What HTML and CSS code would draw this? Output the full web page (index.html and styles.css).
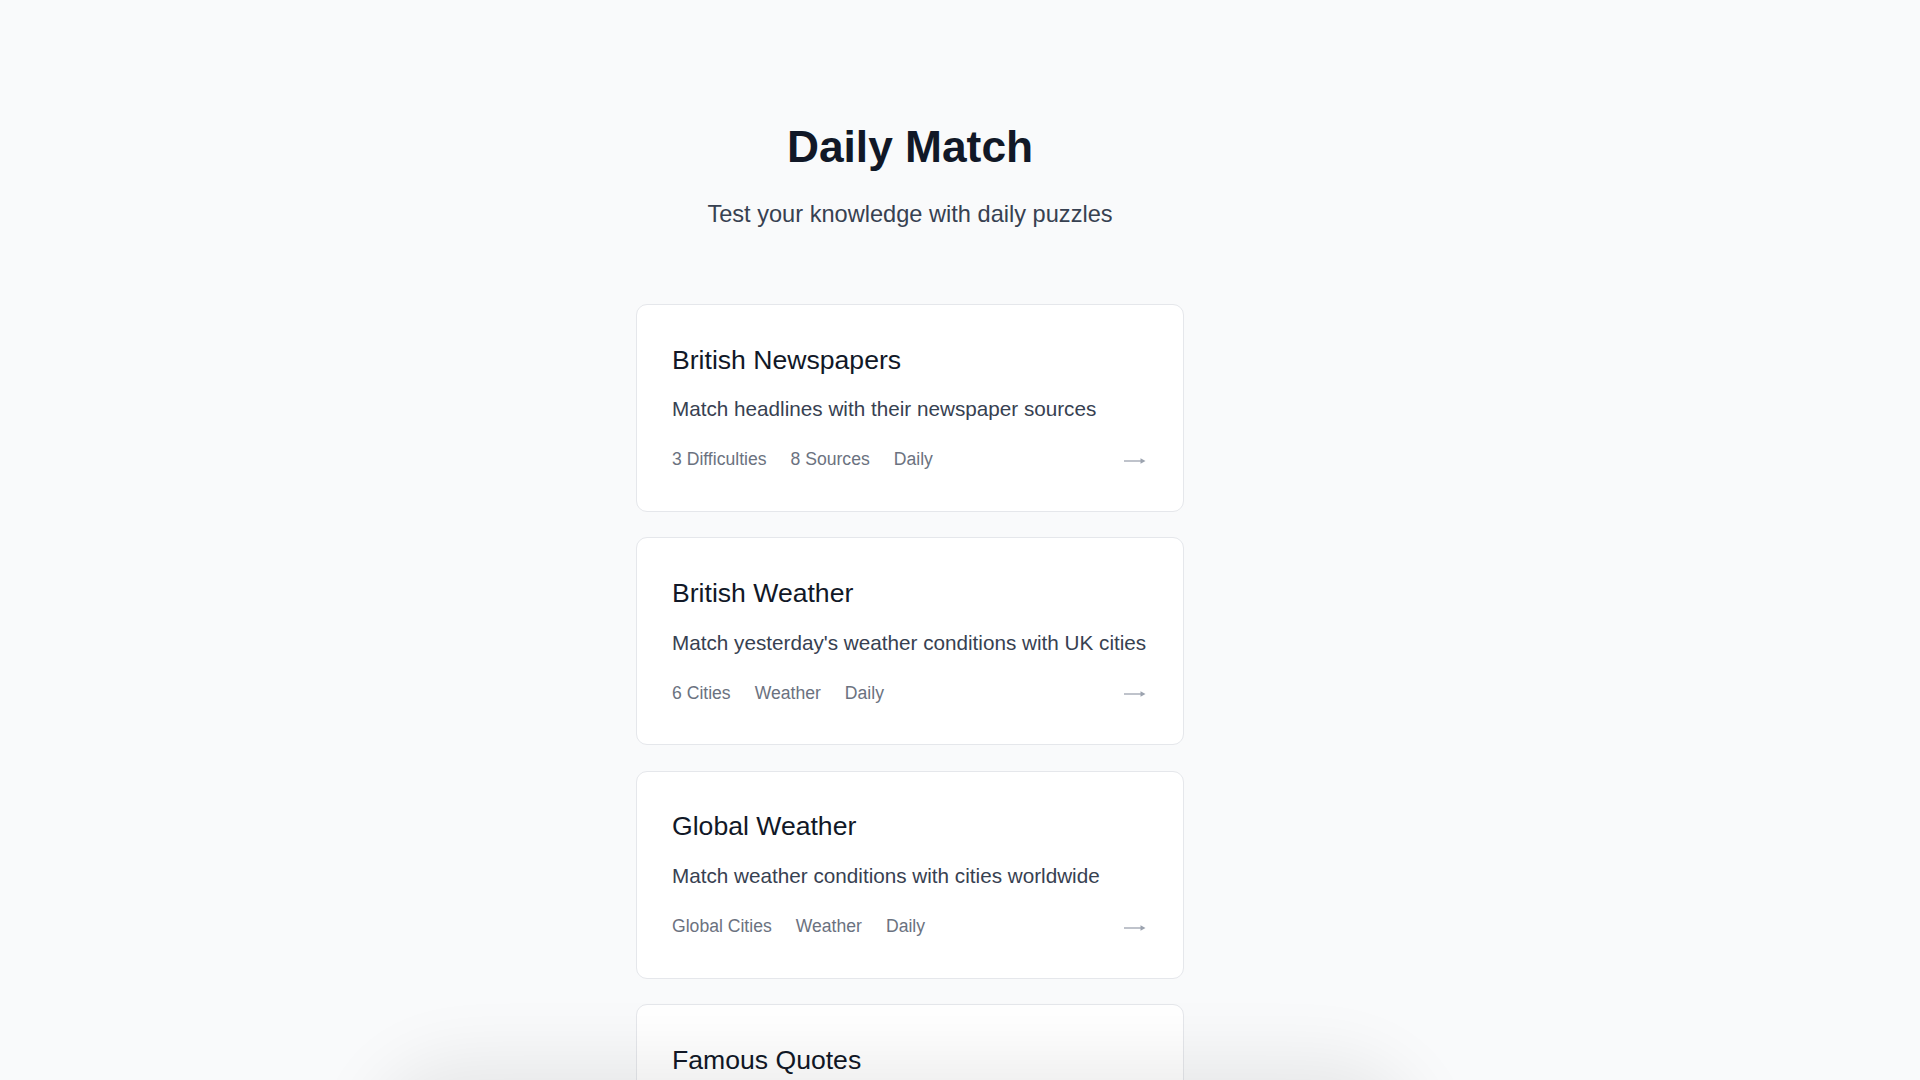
FILE: index.html
```html
<!DOCTYPE html>
<html lang="en">
<head>
<meta charset="utf-8">
<title>Daily Match</title>
<link rel="stylesheet" href="styles.css">
</head>
<body>
<div class="page">
  <main class="main">
    <header class="header">
      <h1 class="title">Daily Match</h1>
      <p class="subtitle">Test your knowledge with daily puzzles</p>
    </header>
    <section class="list">
      <a class="card" href="#">
        <h2 class="card-title">British Newspapers</h2>
        <p class="card-desc">Match headlines with their newspaper sources</p>
        <div class="card-meta">
          <span>3 Difficulties</span><span>8 Sources</span><span>Daily</span>
          <svg class="arrow" width="22" height="10" viewBox="0 0 22 10"><path d="M0 5H19.5" stroke="#9ca3af" stroke-width="1.3"/><path d="M16.5 2.2L21.5 5L16.5 7.8Z" fill="#9ca3af"/></svg>
        </div>
      </a>
      <a class="card" href="#">
        <h2 class="card-title">British Weather</h2>
        <p class="card-desc">Match yesterday's weather conditions with UK cities</p>
        <div class="card-meta">
          <span>6 Cities</span><span>Weather</span><span>Daily</span>
          <svg class="arrow" width="22" height="10" viewBox="0 0 22 10"><path d="M0 5H19.5" stroke="#9ca3af" stroke-width="1.3"/><path d="M16.5 2.2L21.5 5L16.5 7.8Z" fill="#9ca3af"/></svg>
        </div>
      </a>
      <a class="card" href="#">
        <h2 class="card-title">Global Weather</h2>
        <p class="card-desc">Match weather conditions with cities worldwide</p>
        <div class="card-meta">
          <span>Global Cities</span><span>Weather</span><span>Daily</span>
          <svg class="arrow" width="22" height="10" viewBox="0 0 22 10"><path d="M0 5H19.5" stroke="#9ca3af" stroke-width="1.3"/><path d="M16.5 2.2L21.5 5L16.5 7.8Z" fill="#9ca3af"/></svg>
        </div>
      </a>
      <a class="card" href="#">
        <h2 class="card-title">Famous Quotes</h2>
        <p class="card-desc">Match famous quotes with the people who said them</p>
        <div class="card-meta">
          <span>Quotes</span><span>History</span><span>Daily</span>
          <svg class="arrow" width="22" height="10" viewBox="0 0 22 10"><path d="M0 5H19.5" stroke="#9ca3af" stroke-width="1.3"/><path d="M16.5 2.2L21.5 5L16.5 7.8Z" fill="#9ca3af"/></svg>
        </div>
      </a>
    </section>
  </main>
</div>
<div class="bottom-shade"></div>
</body>
</html>
```
FILE: styles.css
```css
html, body {
  margin: 0;
  padding: 0;
  background: #f9fafb;
  font-family: "Liberation Sans", Arial, sans-serif;
}

.page {
  padding: 120px 100px 60px 0;
  display: flex;
  justify-content: center;
}

.main {
  width: 548px;
  display: flex;
  flex-direction: column;
}

.header {
  text-align: center;
  margin-bottom: 71.5px;
}

.title {
  margin: 0 0 24px;
  font-size: 44.3px;
  line-height: 1.2;
  font-weight: 700;
  color: #111827;
  white-space: nowrap;
}

.subtitle {
  margin: 0;
  font-size: 23.6px;
  line-height: 1.5;
  color: #374151;
  white-space: nowrap;
}

.list {
  display: flex;
  flex-direction: column;
  gap: 25.5px;
}

.card {
  display: block;
  text-decoration: none;
  background: #ffffff;
  border: 1px solid #e5e7eb;
  border-radius: 11px;
  padding: 35.5px 35px 35px 35px;
}

.card-title {
  margin: 0 0 13px;
  font-size: 26.6px;
  line-height: 1.5;
  font-weight: 400;
  color: #111827;
}

.card-desc {
  margin: 0 0 18.5px;
  font-size: 20.7px;
  line-height: 1.5;
  color: #374151;
  white-space: nowrap;
}

.card-meta {
  display: flex;
  align-items: center;
  gap: 24px;
  height: 33px;
  font-size: 17.6px;
  line-height: 1.5;
  color: #6b7280;
}

.arrow {
  margin-left: auto;
  margin-right: 2px;
  margin-top: 3px;
}

.bottom-shade {
  position: fixed;
  left: 400px;
  width: 990px;
  top: 1090px;
  height: 120px;
  border-radius: 60px;
  background: #f3f4f6;
  box-shadow: 0 0 70px 30px rgba(0, 0, 0, 0.08);
}
```
